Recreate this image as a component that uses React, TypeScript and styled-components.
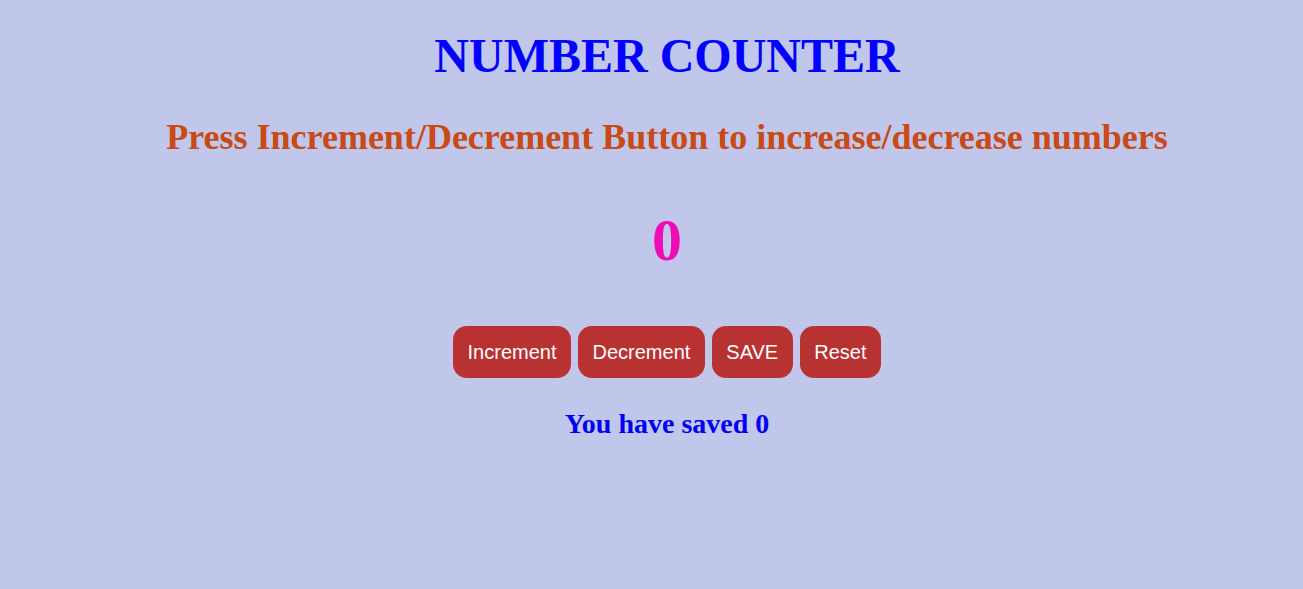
import React, { useState } from "react";
import styled, { createGlobalStyle } from "styled-components";

const Global = createGlobalStyle`
  html, body {
    margin: 0;
    padding: 0;
    background: #c1c6eb;
  }
  body {
    font-family: "Liberation Serif", "Times New Roman", serif;
    min-height: 589px;
  }
`;

const Page = styled.main`
  display: flex;
  flex-direction: column;
  align-items: center;
  padding: 28px 0 0 31px;
`;

const Title = styled.h1`
  margin: 0;
  font-size: 48px;
  font-weight: bold;
  color: #0000ff;
  line-height: normal;
`;

const Subtitle = styled.h2`
  margin: 33px 0 0;
  font-size: 36px;
  font-weight: bold;
  color: #c84a16;
  line-height: normal;
`;

const Count = styled.div`
  margin-top: 48px;
  font-size: 60px;
  font-weight: bold;
  color: #f00cb4;
  line-height: normal;
`;

const ButtonRow = styled.div`
  margin-top: 51px;
  display: flex;
  gap: 7px;
`;

const ActionButton = styled.button`
  height: 52px;
  padding: 0 14.5px;
  border: none;
  border-radius: 14px;
  background: #b83232;
  color: #ffffff;
  font-family: "Liberation Sans", Arial, sans-serif;
  font-size: 20px;
  cursor: pointer;
`;

const Saved = styled.h3`
  margin: 30px 0 0;
  font-size: 28px;
  font-weight: bold;
  color: #0000ee;
  line-height: normal;
`;

export default function App() {
  const [count, setCount] = useState(0);
  const [saved, setSaved] = useState(0);
  return (
    <>
      <Global />
      <Page>
        <Title>NUMBER COUNTER</Title>
        <Subtitle>Press Increment/Decrement Button to increase/decrease numbers</Subtitle>
        <Count>{count}</Count>
        <ButtonRow>
          <ActionButton onClick={() => setCount(count + 1)}>Increment</ActionButton>
          <ActionButton onClick={() => setCount(count - 1)}>Decrement</ActionButton>
          <ActionButton onClick={() => setSaved(count)}>SAVE</ActionButton>
          <ActionButton onClick={() => setCount(0)}>Reset</ActionButton>
        </ButtonRow>
        <Saved>You have saved {saved}</Saved>
      </Page>
    </>
  );
}
